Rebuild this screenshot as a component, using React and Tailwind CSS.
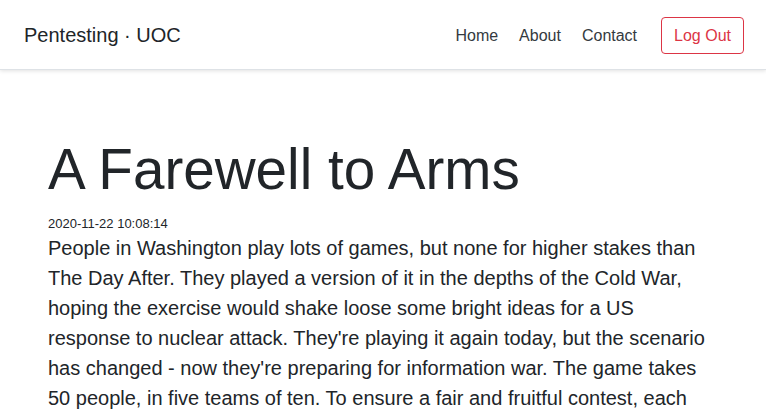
import React from 'react';

const body = "People in Washington play lots of games, but none for higher stakes than The Day After. They played a version of it in the depths of the Cold War, hoping the exercise would shake loose some bright ideas for a US response to nuclear attack. They're playing it again today, but the scenario has changed - now they're preparing for information war. The game takes 50 people, in five teams of ten. To ensure a fair and fruitful contest, each team gets a mix of experts from the military, intelligence and law enforcement agencies.";

const App = () => {
    return (
        <div className="h-screen overflow-hidden bg-white text-[#212529]" style={{ fontFamily: '"Liberation Sans", Arial, sans-serif' }}>

            {/* Navbar */}
            <nav className="h-[70px] flex items-center justify-between pl-6 pr-[22px] shadow-[0_1px_4px_rgba(0,0,0,0.12)] border-b border-[#dee2e6]">
                <a className="text-[20px] text-[#212529]">Pentesting · UOC</a>
                <div className="flex items-center pt-[2px]">
                    <a className="text-base text-[#343a40] px-2">Home</a>
                    <a className="text-base text-[#343a40] px-2 ml-[5px]">About</a>
                    <a className="text-base text-[#343a40] px-2 ml-[5px]">Contact</a>
                    <button className="ml-4 h-[37px] px-3 border border-[#dc3545] rounded-[4px] text-base text-[#dc3545]">
                        Log Out
                    </button>
                </div>
            </nav>

            {/* Post */}
            <div className="px-12 pt-[66px]">
                <h1 className="text-[56.6px] leading-[1.2]">A Farewell to Arms</h1>
                <p className="text-[13px] mt-[12px] leading-[1.2]">2020-11-22 10:08:14</p>
                <p className="text-[20px] leading-[30px] mt-[1px]">{body}</p>
            </div>
        </div>
    );
};

export default App;
